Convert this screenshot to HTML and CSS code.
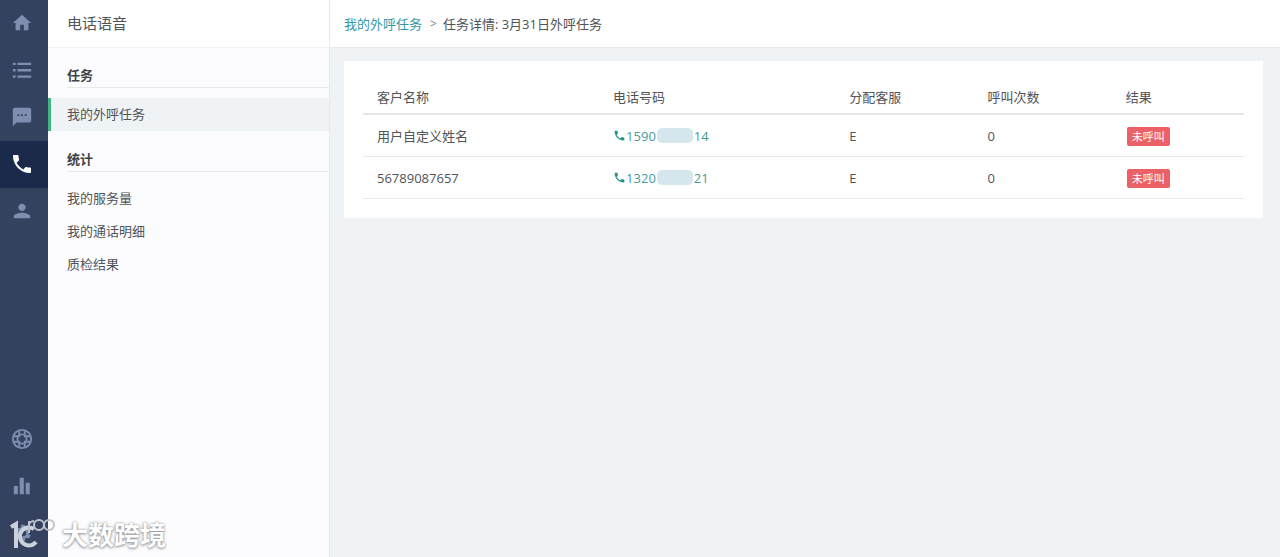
FILE: index.html
```html
<!DOCTYPE html>
<html lang="zh-CN">
<head>
<meta charset="utf-8">
<meta name="viewport" content="width=device-width, initial-scale=1">
<title>电话语音</title>
<link rel="stylesheet" href="styles.css">
</head>
<body>
<div class="app">
  <nav class="rail" aria-label="主导航">
    <a class="rail-item" href="#" aria-label="首页"><svg class="icon" viewBox="0 0 24 24"><path d="M10 20v-6h4v6h5v-8h3L12 3 2 12h3v8z"/></svg></a>
    <a class="rail-item" href="#" aria-label="列表"><svg class="icon" viewBox="0 0 24 24"><path d="M2 4h3v2.500H2zM2 11h3v2.500H2zM2 18h3v2.500H2zM7 4h15v2.500H7zM7 11h15v2.500H7zM7 18h15v2.500H7z"/></svg></a>
    <a class="rail-item" href="#" aria-label="消息"><svg class="icon" viewBox="0 0 24 24"><path d="M20 2H4c-1.100 0-2 .9-2 2v18l4-4h14c1.100 0 2-.9 2-2V4c0-1.100-.9-2-2-2zM9 11H7V9h2v2zm4 0h-2V9h2v2zm4 0h-2V9h2v2z"/></svg></a>
    <a class="rail-item rail-active" href="#" aria-label="电话" aria-current="page"><svg class="icon icon-phone" viewBox="0 0 24 24"><path d="M6.620 10.790c1.440 2.830 3.760 5.140 6.590 6.590l2.200-2.200c.27-.27.67-.36 1.020-.24 1.120.37 2.330.57 3.570.57.55 0 1 .45 1 1V20c0 .55-.45 1-1 1-9.390 0-17-7.610-17-17 0-.55.45-1 1-1h3.500c.55 0 1 .45 1 1 0 1.250.2 2.450.57 3.570.11.35.03.74-.25 1.020l-2.200 2.200z"/></svg></a>
    <a class="rail-item" href="#" aria-label="客户"><svg class="icon" viewBox="0 0 24 24"><path d="M12 12c2.210 0 4-1.790 4-4s-1.790-4-4-4-4 1.790-4 4 1.790 4 4 4zm0 2c-2.670 0-9 1.340-9 4v2h18v-2c0-2.660-6.330-4-9-4z"/></svg></a>
    <a class="rail-item rail-bottom" href="#" aria-label="帮助"><svg class="icon icon-line" viewBox="0 0 24 24"><circle cx="12" cy="12" r="10"/><circle cx="12" cy="12" r="5"/><path d="M9 3v6H3M15 3v6h6M9 21v-6H3M15 21v-6h6"/></svg></a>
    <a class="rail-item" href="#" aria-label="报表"><svg class="icon" viewBox="0 0 24 24"><path d="M3 12h4.500v9H3zM9.500 3H14v18H9.500zM16 8.500h4.500V21H16z"/></svg></a>
    <a class="rail-item" href="#" aria-label="设置"><svg class="icon" viewBox="0 0 24 24"><path d="M19.400 13a7.500 7.500 0 0 0 0-2l2.100-1.600-2-3.500-2.500 1a7 7 0 0 0-1.700-1L15 3h-4l-.4 2.900a7 7 0 0 0-1.700 1l-2.500-1-2 3.500L6.600 11a7.500 7.500 0 0 0 0 2l-2.200 1.600 2 3.500 2.500-1a7 7 0 0 0 1.700 1L11 21h4l.4-2.900a7 7 0 0 0 1.700-1l2.500 1 2-3.500zM13 15.500a3.500 3.500 0 1 1 0-7 3.500 3.500 0 0 1 0 7z"/></svg></a>
  </nav>

  <aside class="sidebar">
    <h1 class="sidebar-title">电话语音</h1>
    <section class="group">
      <h2 class="group-title">任务</h2>
      <a class="menu-link menu-active" href="#" aria-current="page">我的外呼任务</a>
    </section>
    <section class="group">
      <h2 class="group-title">统计</h2>
      <a class="menu-link" href="#">我的服务量</a>
      <a class="menu-link" href="#">我的通话明细</a>
      <a class="menu-link" href="#">质检结果</a>
    </section>
  </aside>

  <div class="content">
    <header class="crumbs">
      <a class="crumb-link" href="#">我的外呼任务</a>
      <span class="crumb-sep">&gt;</span>
      <span>任务详情: 3月31日外呼任务</span>
    </header>
    <main class="card">
      <table class="tasks">
        <colgroup><col class="col-wide"><col class="col-wide"><col class="col-mid"><col class="col-mid"><col></colgroup>
        <thead>
          <tr><th>客户名称</th><th>电话号码</th><th>分配客服</th><th>呼叫次数</th><th>结果</th></tr>
        </thead>
        <tbody>
          <tr>
            <td>用户自定义姓名</td>
            <td><a class="phone" href="#"><svg class="phone-icon" viewBox="0 0 24 24"><path d="M6.620 10.790c1.440 2.830 3.760 5.140 6.590 6.590l2.200-2.200c.27-.27.67-.36 1.020-.24 1.120.37 2.330.57 3.570.57.55 0 1 .45 1 1V20c0 .55-.45 1-1 1-9.390 0-17-7.610-17-17 0-.55.45-1 1-1h3.500c.55 0 1 .45 1 1 0 1.250.2 2.450.57 3.570.11.35.03.74-.25 1.020l-2.200 2.200z"/></svg>1590<span class="mask"></span>14</a></td>
            <td>E</td><td>0</td>
            <td><span class="badge">未呼叫</span></td>
          </tr>
          <tr>
            <td>56789087657</td>
            <td><a class="phone" href="#"><svg class="phone-icon" viewBox="0 0 24 24"><path d="M6.620 10.790c1.440 2.830 3.760 5.140 6.590 6.590l2.200-2.200c.27-.27.67-.36 1.020-.24 1.120.37 2.330.57 3.570.57.55 0 1 .45 1 1V20c0 .55-.45 1-1 1-9.390 0-17-7.610-17-17 0-.55.45-1 1-1h3.500c.55 0 1 .45 1 1 0 1.250.2 2.450.57 3.570.11.35.03.74-.25 1.020l-2.200 2.200z"/></svg>1320<span class="mask"></span>21</a></td>
            <td>E</td><td>0</td>
            <td><span class="badge">未呼叫</span></td>
          </tr>
        </tbody>
      </table>
    </main>
  </div>
</div>

<div class="watermark">
  <svg class="watermark-logo" viewBox="0 0 46 36"><path class="logo-main" d="M1 10l5-3v24M24 12a9 9 0 1 0 2 13"/><path class="logo-loops" d="M19 4v12M19 9a5 5 0 0 1 5-5M34 8a5 5 0 1 1-10 0 5 5 0 1 1 10 0a5 5 0 1 0 10 0a5 5 0 1 0-10 0"/></svg>
  <span>大数跨境</span>
</div>
</body>
</html>
```
FILE: styles.css
```css
* {
  box-sizing: border-box;
}

body {
  margin: 0;
  font-family: "Open Sans", "Noto Sans CJK SC", sans-serif;
  font-size: 13px;
  line-height: 20px;
  color: #505357;
  background: #f0f3f6;
}

a {
  color: inherit;
  text-decoration: none;
}

.app {
  display: flex;
  min-height: 100vh;
}

.rail {
  display: flex;
  flex-direction: column;
  flex: none;
  width: 48px;
  background: #34425f;
}

.rail-item {
  display: flex;
  align-items: center;
  justify-content: center;
  height: 47px;
  padding: 0 4px 2px 0;
  color: #7f8db0;
}

.rail-active {
  background: #1b294b;
  color: #fff;
}

.rail-bottom {
  margin-top: auto;
}

.icon {
  width: 22px;
  height: 22px;
  fill: currentColor;
}

.icon-phone {
  width: 24px;
  height: 24px;
}

.icon-line {
  fill: none;
  stroke: currentColor;
  stroke-width: 2;
}

.sidebar {
  flex: none;
  width: 282px;
  background: #fcfcfe;
  border-right: 1px solid #e5e8ec;
}

.sidebar-title {
  margin: 0 0 17px;
  padding: 0 19px;
  font-size: 15px;
  font-weight: 400;
  line-height: 47px;
  background: #fff;
  border-bottom: 1px solid #f2f3f5;
}

.group {
  margin-bottom: 18px;
}

.group-title {
  margin: 0 0 10px 19px;
  padding-bottom: 2px;
  font-size: 13px;
  font-weight: 700;
  line-height: 20px;
  color: #404347;
  border-bottom: 1px solid #e7e9ed;
}

.menu-link {
  display: block;
  padding: 0 16px;
  line-height: 33px;
  border-left: 3px solid transparent;
}

.menu-active {
  background: #f0f3f5;
  border-left-color: #43b384;
}

.content {
  flex: 1;
  min-width: 0;
}

.crumbs {
  display: flex;
  align-items: center;
  gap: 6px;
  height: 48px;
  padding: 0 14px;
  background: #fff;
  border-bottom: 1px solid #e8eaed;
}

.crumb-link {
  color: #3498a8;
}

.crumb-sep {
  padding-left: 2px;
  font-size: 12px;
  color: #808488;
}

.card {
  margin: 13px 17px 13px 14px;
  padding: 19px;
  background: #fff;
}

.tasks {
  width: 100%;
  table-layout: fixed;
  border-collapse: separate;
  border-spacing: 0;
}

.col-wide {
  width: 26.8%;
}

.col-mid {
  width: 15.7%;
}

.tasks th,
.tasks td {
  height: 42px;
  padding: 0 14px;
  font-weight: 400;
  text-align: left;
  border-bottom: 1px solid #e7eaec;
}

.tasks th {
  height: 35px;
  border-bottom: 2px solid #e4e7ea;
}

.phone {
  display: flex;
  align-items: center;
  color: #4a9a98;
}

.phone-icon {
  width: 13px;
  height: 13px;
  fill: #259485;
}

.mask {
  width: 36px;
  height: 15px;
  margin: 0 1px;
  border-radius: 5px;
  background: #d5e7ed;
}

.badge {
  display: inline-block;
  margin-left: 1px;
  padding: 0 5px;
  font-size: 11px;
  line-height: 19px;
  vertical-align: middle;
  color: #fff;
  background: #ea6266;
  border-radius: 2px;
}

.watermark {
  position: absolute;
  bottom: 4px;
  left: 10px;
  display: flex;
  align-items: center;
  gap: 6px;
  font-size: 26px;
  font-weight: 700;
  line-height: 36px;
  color: #fff;
  text-shadow: 0 0 2px #8f9298, 0 1px 3px #8f9298;
  pointer-events: none;
}

.watermark-logo {
  width: 46px;
  height: 36px;
  fill: none;
  stroke: #ccd2dc;
}

.logo-main {
  stroke-width: 4;
}

.logo-loops {
  stroke: #bcc3cf;
  stroke-width: 2;
}
```
